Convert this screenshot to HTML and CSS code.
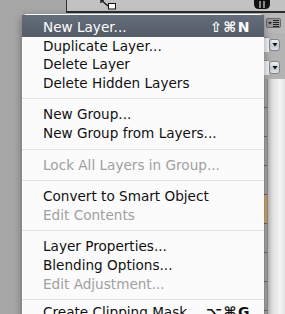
FILE: index.html
```html
<!DOCTYPE html>
<html>
<head>
<meta charset="utf-8">
<link rel="stylesheet" href="styles.css">
</head>
<body>
<div class="screen">
  <div class="topbar">
    <div class="spacer"></div>
    <div class="toolbox">
      <svg class="tool-a" width="18" height="10" viewBox="0 0 18 10">
        <path d="M1 0 L8 6" stroke="#111" stroke-width="1.3" fill="none"/>
        <path d="M1 0 V3 M1 0 H4" stroke="#111" stroke-width="1.3" fill="none"/>
        <rect x="8.5" y="3.5" width="7" height="5.5" fill="#fff" stroke="#111" stroke-width="1"/>
      </svg>
      <svg class="tool-b" width="18" height="10" viewBox="0 0 18 10">
        <path d="M1 0 H17 V4 Q17 9 12 9 H6 Q1 9 1 4 Z" fill="#111"/>
        <path d="M7 1 V8 M11 1 V8" stroke="#d8d8d8" stroke-width="1.2"/>
      </svg>
    </div>
  </div>
  <div class="panel">
    <div class="panel-head">
      <span class="flyout">
        <svg width="15" height="10" viewBox="0 0 15 10">
          <path d="M2 4 H6 L4 6.5 Z" fill="#222"/>
          <path d="M7 2.5 H13 M7 4.5 H13 M7 6.5 H13 M7 8.5 H13" stroke="#222" stroke-width="1"/>
        </svg>
      </span>
    </div>
    <div class="opt-row">
      <span class="field"></span>
      <span class="drop"><svg width="6" height="5" viewBox="0 0 6 5"><path d="M0.5 1 H5.5 L3 4.5 Z" fill="#111"/></svg></span>
    </div>
    <div class="opt-row tall">
      <span class="field"></span>
      <span class="drop"><svg width="6" height="5" viewBox="0 0 6 5"><path d="M0.5 1 H5.5 L3 4.5 Z" fill="#111"/></svg></span>
    </div>
    <div class="layer-area">
      <div class="layers">
        <div class="layer-row"></div>
        <div class="layer-row"></div>
        <div class="layer-row"></div>
        <div class="layer-row"></div>
        <div class="layer-row selected"></div>
        <div class="layer-row"></div>
        <div class="layer-row"></div>
        <div class="layer-row"></div>
      </div>
      <div class="scroll"></div>
    </div>
  </div>

  <div class="menu">
    <div class="item active first"><span>New Layer...</span><span class="key">⇧⌘N</span></div>
    <div class="item"><span>Duplicate Layer...</span></div>
    <div class="item"><span>Delete Layer</span></div>
    <div class="item"><span>Delete Hidden Layers</span></div>
    <div class="sep"></div>
    <div class="item"><span>New Group...</span></div>
    <div class="item"><span>New Group from Layers...</span></div>
    <div class="sep"></div>
    <div class="item disabled"><span>Lock All Layers in Group...</span></div>
    <div class="sep"></div>
    <div class="item"><span>Convert to Smart Object</span></div>
    <div class="item disabled"><span>Edit Contents</span></div>
    <div class="sep"></div>
    <div class="item"><span>Layer Properties...</span></div>
    <div class="item"><span>Blending Options...</span></div>
    <div class="item disabled"><span>Edit Adjustment...</span></div>
    <div class="sep short"></div>
    <div class="item"><span>Create Clipping Mask</span><span class="key">⌥⌘G</span></div>
  </div>
</div>
</body>
</html>
```

FILE: styles.css
```css
html, body {
  margin: 0;
  padding: 0;
}
body {
  background: #a6a6a6;
  font-family: "DejaVu Sans", "Liberation Sans", sans-serif;
}
.screen {
  position: relative;
  width: 285px;
  height: 314px;
  overflow: hidden;
  background: #a6a6a6;
}
.topbar {
  display: flex;
  height: 13px;
}
.spacer {
  width: 66px;
}
.toolbox {
  flex: 1;
  background: #c2c2c2;
  border-left: 1px solid #333;
  border-bottom: 2px solid #2b2b2b;
  position: relative;
  display: flex;
  align-items: flex-start;
}
.tool-a {
  margin-left: 33px;
}
.tool-b {
  margin-left: auto;
  margin-right: 14px;
}
.panel {
  margin-left: 66px;
  display: flex;
  flex-direction: column;
  background: #b3b3b3;
  height: 301px;
}
.panel-head {
  height: 20px;
  display: flex;
  justify-content: flex-end;
  align-items: center;
  padding-right: 4px;
  background: #b8b8b8;
}
.flyout {
  width: 15px;
  height: 10px;
  display: block;
  background: #9a9a9a;
  border: 1px solid #6a6a6a;
  box-sizing: border-box;
  border-radius: 2px;
  overflow: hidden;
}
.flyout svg {
  display: block;
  margin: -1px 0 0 -1px;
}
.opt-row {
  height: 23px;
  display: flex;
  align-items: center;
  padding-right: 5px;
}
.field {
  flex: 1;
  height: 14px;
  background: #f6f6f6;
  border-top: 1px solid #9a9a9a;
}
.drop {
  width: 11px;
  height: 12px;
  display: flex;
  align-items: center;
  justify-content: center;
  border: 1px solid #7d8590;
  border-radius: 3px;
  background: linear-gradient(#f2f4f6, #c3c9d0 55%, #dfe3e8);
  box-sizing: border-box;
}
.opt-row.tall .drop {
  height: 13px;
}
.layer-area {
  flex: 1;
  display: flex;
}
.layers {
  flex: 1;
  background: #a9a9a9;
  display: flex;
  flex-direction: column;
}
.layer-row {
  height: 28px;
  border-bottom: 1px solid #6c6c6c;
}
.layer-row.selected {
  background: #d1ab70;
}
.scroll {
  width: 17px;
  border-left: 1px solid #8f8f8f;
  background: linear-gradient(90deg, #bcbcbc, #dedede 25%, #f5f5f5 70%, #e2e2e2);
}
.menu {
  position: absolute;
  top: 14px;
  left: 22px;
  width: 242px;
  height: 320px;
  padding-top: 1px;
  background: #fbfbfb;
  border-radius: 5px 5px 0 0;
  box-shadow: 0 3px 9px rgba(0, 0, 0, 0.4);
  font-size: 13.6px;
  color: #111;
}
.item {
  display: flex;
  justify-content: space-between;
  align-items: baseline;
  height: 18.6px;
  line-height: 18.6px;
  padding: 0 14px 0 21px;
  white-space: nowrap;
}
.item.first {
  padding-top: 3px;
}
.item.active {
  background: linear-gradient(#646d7a, #545c68);
  color: #fff;
}
.item.disabled {
  color: #a0a0a0;
}
.key {
  font-size: 14px;
  font-weight: bold;
  letter-spacing: 1.5px;
  margin-right: -1px;
}
.sep {
  height: 6px;
  border-bottom: 1px solid #e2e2e2;
  margin-bottom: 6px;
}
.sep.short {
  margin-bottom: 3px;
}
```
